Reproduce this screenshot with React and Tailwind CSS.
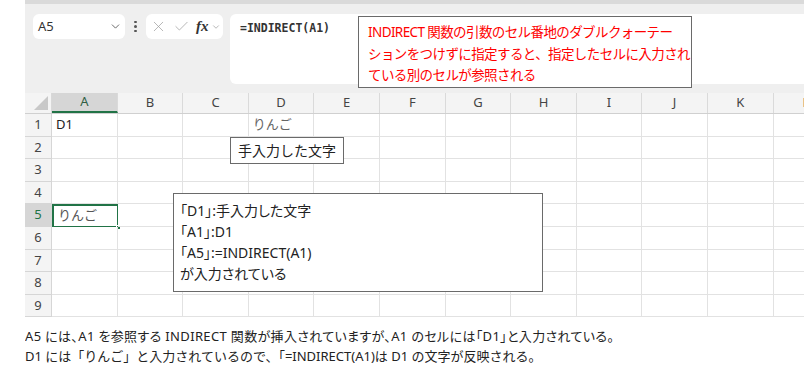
import { ChevronDown, X, Check } from "lucide-react";

const cols = ["A", "B", "C", "D", "E", "F", "G", "H", "I", "J", "K", "L"];
const rows = [1, 2, 3, 4, 5, 6, 7, 8, 9];

const jp = "font-['Noto_Sans','Noto_Sans_CJK_JP',sans-serif]";

function Cell({ row, col }) {
  let text = null;
  if (row === 1 && col === "A") text = <span className="text-[#222]">D1</span>;
  if (row === 1 && col === "D") text = <span className="text-[#666]">りんご</span>;
  if (row === 5 && col === "A") text = <span className="text-[#555]">りんご</span>;
  const selected = row === 5 && col === "A";
  return (
    <div
      className={`relative w-[65.6px] shrink-0 h-full border-r border-b border-[#e2e2e2] flex items-center px-[4px] text-[13px] ${
        selected ? "border-2 !border-[#217346]" : ""
      }`}
    >
      {text}
      {selected && (
        <div className="absolute -right-[4px] -bottom-[4px] w-[5px] h-[5px] bg-[#217346] border border-white" />
      )}
    </div>
  );
}

export default function App() {
  return (
    <div className={`relative w-[812px] h-[377px] bg-white overflow-hidden ${jp}`}>
      <div className="ml-[25px] w-[779px] overflow-hidden">
        {/* TOOLBAR */}
        <div className="h-[92.5px] bg-[#efefef] border-t-[4px] border-[#dadada] pt-[10px] flex items-start">
          <div className="ml-[8px] w-[92px] h-[25px] bg-white rounded-md flex items-center justify-between pl-[5px] pr-[3px]">
            <span className="text-[13px] text-[#333]">A5</span>
            <ChevronDown size={13} strokeWidth={1.6} className="text-[#555]" />
          </div>
          <div className="w-[21px] h-[25px] flex flex-col items-center justify-center gap-[2px]">
            <span className="w-[2.5px] h-[2.5px] rounded-full bg-[#555]" />
            <span className="w-[2.5px] h-[2.5px] rounded-full bg-[#555]" />
            <span className="w-[2.5px] h-[2.5px] rounded-full bg-[#555]" />
          </div>
          <div className="w-[77px] h-[25px] bg-white rounded-md flex items-center pl-[4px] gap-[6px]">
            <X size={17} strokeWidth={1} className="text-[#9a9a9a]" />
            <Check size={17} strokeWidth={1} className="text-[#9a9a9a]" />
            <span className="font-['Liberation_Serif',serif] italic font-bold text-[15px] text-[#333] leading-none">
              fx
            </span>
            <ChevronDown size={10} strokeWidth={1.4} className="text-[#888] -ml-[4px]" />
          </div>
          <div className="ml-[7px] flex-1 h-[70px] bg-white rounded-l-md pl-[10px]">
            <span className="font-['DejaVu_Sans_Mono',monospace] text-[11.5px] leading-[25px] font-semibold text-[#333]">
              =INDIRECT(A1)
            </span>
          </div>
        </div>

        {/* COLUMN HEADER */}
        <div className="flex h-[21.5px] bg-[#f4f4f4] border-b border-[#d0d0d0]">
          <div className="relative w-[27px] shrink-0 border-r border-[#d8d8d8]">
            <div className="absolute right-[3px] bottom-[3px] w-0 h-0 border-l-[14px] border-l-transparent border-b-[14px] border-b-[#c8c8c8]" />
          </div>
          {cols.map((c) => (
            <div
              key={c}
              className={`w-[65.6px] shrink-0 flex items-center justify-center text-[13px] border-r border-[#dadada] ${
                c === "A" ? "bg-[#d6d6d6] text-[#2f5f44] border-b-2 border-b-[#217346]" : "text-[#444]"
              }`}
            >
              {c}
            </div>
          ))}
        </div>

        {/* ROWS */}
        {rows.map((r) => (
          <div key={r} className="flex h-[22.6px]">
            <div
              className={`w-[27px] shrink-0 flex items-center justify-center text-[13px] border-r border-b border-[#d6d6d6] ${
                r === 5 ? "bg-[#d6d6d6] text-[#217346]" : "bg-[#f4f4f4] text-[#444]"
              }`}
            >
              {r}
            </div>
            {cols.map((c) => (
              <Cell key={c} row={r} col={c} />
            ))}
          </div>
        ))}

        {/* NOTE */}
        <div className="mt-[9px] text-[13px] leading-[20px] text-[#222]">
          <p className="[font-feature-settings:'palt'] tracking-[0.35px]">
            A5 には、A1 を参照する INDIRECT 関数が挿入されていますが、A1 のセルには「D1」と入力されている。
          </p>
          <p>D1 には「りんご」と入力されているので、「=INDIRECT(A1)は D1 の文字が反映される。</p>
        </div>
      </div>

      {/* CALLOUTS */}
      <div className="absolute left-[358px] top-[16px] w-[334px] h-[72px] bg-white border border-[#6a6a6a] pl-[9px] pt-[5px] text-[13.5px] leading-[21.5px] text-[#ff0000] tracking-[-0.6px]">
        <p>INDIRECT 関数の引数のセル番地のダブルクォーテー</p>
        <p>ションをつけずに指定すると、指定したセルに入力され</p>
        <p>ている別のセルが参照される</p>
      </div>

      <div className="absolute left-[230px] top-[137px] w-[114px] h-[27px] bg-white border border-[#6a6a6a] pl-[7px] flex items-center text-[14px] text-[#222]">
        手入力した文字
      </div>

      <div className="absolute left-[173px] top-[193px] w-[370px] h-[99px] bg-white border border-[#6a6a6a] pl-[6px] pt-[6px] text-[14px] leading-[21px] text-[#222] [font-feature-settings:'palt']">
        <p>「D1」:手入力した文字</p>
        <p>「A1」:D1</p>
        <p>「A5」:=INDIRECT(A1)</p>
        <p>が入力されている</p>
      </div>
    </div>
  );
}
